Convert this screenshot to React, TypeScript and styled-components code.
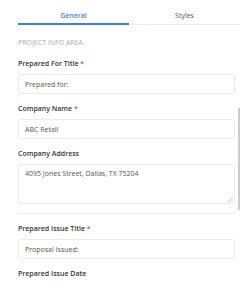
import React from "react";
import styled, { createGlobalStyle } from "styled-components";

const Global = createGlobalStyle`
  html, body { margin: 0; padding: 0; background: #fff; }
  body { font-family: "Open Sans", "Noto Sans", sans-serif; color: #333; }
  * { box-sizing: border-box; }
`;

const Page = styled.div`
  position: relative;
  width: 248px;
  height: 286px;
  overflow: hidden;
  background: #fff;
`;

const TabRow = styled.div`
  display: flex;
  margin-left: 18px;
  width: 222px;
  border-bottom: 1px solid #eeeeee;
`;

const Tab = styled.div<{ $active?: boolean }>`
  flex: 1;
  text-align: center;
  padding: 10px 0 1px;
  line-height: 12px;
  font-size: 7px;
  font-weight: ${(p) => (p.$active ? 600 : 400)};
  color: ${(p) => (p.$active ? "#4a7fd4" : "#555")};
  border-bottom: 2px solid ${(p) => (p.$active ? "#3f7fd9" : "transparent")};
  margin-bottom: -1px;
`;

const Form = styled.div`
  padding: 12px 13px 0 18px;
  display: flex;
  flex-direction: column;
`;

const Heading = styled.div`
  font-size: 7px;
  line-height: 12px;
  color: #a8acb3;
  margin-bottom: 9px;
`;

const Field = styled.div`
  display: flex;
  flex-direction: column;
  gap: 4px;
  margin-bottom: 9px;
`;

const Label = styled.div`
  font-size: 7px;
  line-height: 12px;
  font-weight: 600;
  color: #333;
`;

const Star = styled.span`
  color: #e5534b;
`;

const Input = styled.div`
  height: 20px;
  border: 1px solid #ebebeb;
  border-radius: 3px;
  padding: 0 6px;
  display: flex;
  align-items: center;
  font-size: 7px;
  color: #555;
`;

const TextArea = styled.div`
  position: relative;
  height: 40px;
  border: 1px solid #ebebeb;
  border-radius: 3px;
  padding: 3px 6px;
  font-size: 7px;
  line-height: 11px;
  color: #555;
`;

const Grip = styled.svg`
  position: absolute;
  right: 1px;
  bottom: 1px;
`;

const Divider = styled.div`
  height: 1px;
  background: #eeeeee;
  margin-bottom: 9px;
`;

const ScrollThumb = styled.div`
  position: absolute;
  left: 238px;
  top: 108px;
  width: 2px;
  height: 102px;
  background: #c8cbd0;
`;

const fields1 = [
  { label: "Prepared For Title", req: true, value: "Prepared for:" },
  { label: "Company Name", req: true, value: "ABC Retail" },
];

export default function App() {
  return (
    <Page>
      <Global />
      <TabRow>
        <Tab $active>General</Tab>
        <Tab>Styles</Tab>
      </TabRow>
      <Form>
        <Heading>PROJECT INFO AREA</Heading>
        {fields1.map((f) => (
          <Field key={f.label}>
            <Label>
              {f.label} {f.req && <Star>*</Star>}
            </Label>
            <Input>{f.value}</Input>
          </Field>
        ))}
        <Field>
          <Label>Company Address</Label>
          <TextArea>
            4095 Jones Street, Dallas, TX 75204
            <Grip width="5" height="5" viewBox="0 0 5 5">
              <path d="M5 0L0 5M5 2.5L2.5 5" stroke="#aaa" strokeWidth="0.6" />
            </Grip>
          </TextArea>
        </Field>
        <Divider />
        <Field>
          <Label>
            Prepared Issue Title <Star>*</Star>
          </Label>
          <Input>Proposal Issued:</Input>
        </Field>
        <Field>
          <Label>Prepared Issue Date</Label>
        </Field>
      </Form>
      <ScrollThumb />
    </Page>
  );
}
